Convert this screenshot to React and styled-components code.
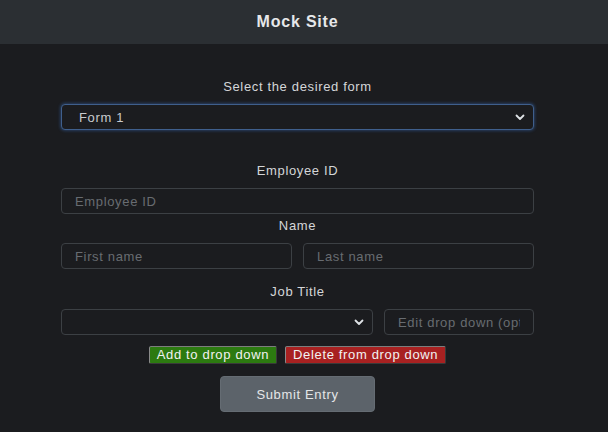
import styled, { createGlobalStyle } from "styled-components";

const GlobalStyle = createGlobalStyle`
  html, body {
    margin: 0;
    padding: 0;
    background-color: #1b1c1f;
    font-family: "Liberation Sans", Arial, sans-serif;
    color: #dee2e6;
  }
`;

const Chevron = () => (
  <svg width="10" height="7" viewBox="0 0 10 7">
    <polyline
      points="1.5,1.5 5,5 8.5,1.5"
      fill="none"
      stroke="#dee2e6"
      strokeWidth="1.8"
      strokeLinecap="round"
      strokeLinejoin="round"
    />
  </svg>
);

const App = () => {
  return (
    <>
      <GlobalStyle />
      <Header>
        <Title>Mock Site</Title>
      </Header>
      <Main>
        <Container>
          <Label $top={0}>Select the desired form</Label>
          <Select $focused>
            <span>Form 1</span>
            <Chevron />
          </Select>

          <Label $top={33}>Employee ID</Label>
          <Input placeholder="Employee ID" />

          <Label $top={4}>Name</Label>
          <Row $cols="1fr 1fr">
            <Input placeholder="First name" />
            <Input placeholder="Last name" />
          </Row>

          <Label $top={15}>Job Title</Label>
          <Row $cols="312fr 150fr">
            <Select>
              <span />
              <Chevron />
            </Select>
            <Input placeholder="Edit drop down (optional)" />
          </Row>

          <ButtonRow>
            <SmallButton $bg="#2c7a10">Add to drop down</SmallButton>
            <SmallButton $bg="#a82121">Delete from drop down</SmallButton>
          </ButtonRow>

          <SubmitRow>
            <SubmitButton>Submit Entry</SubmitButton>
          </SubmitRow>
        </Container>
      </Main>
    </>
  );
};

export default App;

const Header = styled.header`
  height: 44px;
  background-color: #2b2f33;
  display: flex;
  align-items: center;
  justify-content: center;
  padding-right: 13px;
`;

const Title = styled.h1`
  margin: 0;
  font-size: 16px;
  font-weight: 700;
  letter-spacing: 0.05em;
  color: #e6e8ea;
`;

const Main = styled.main`
  width: 595px;
  padding-top: 35px;
`;

const Container = styled.div`
  width: 473px;
  margin: 0 auto;
  display: flex;
  flex-direction: column;
`;

const Label = styled.label`
  display: block;
  margin-top: ${(p) => p.$top}px;
  margin-bottom: 9px;
  text-align: center;
  font-size: 13px;
  line-height: 16px;
  letter-spacing: 0.05em;
  color: #d4d6d8;
`;

const Row = styled.div`
  display: grid;
  grid-template-columns: ${(p) => p.$cols};
  gap: 11px;
`;

const Input = styled.input`
  box-sizing: border-box;
  width: 100%;
  height: 26px;
  padding: 0 13px;
  background-color: #1b1c1f;
  border: 1px solid #3c4044;
  border-radius: 4px;
  font-family: "Liberation Sans", Arial, sans-serif;
  font-size: 13px;
  letter-spacing: 0.05em;
  color: #dee2e6;
  outline: none;
  &::placeholder {
    color: #686c71;
  }
`;

const Select = styled.div`
  box-sizing: border-box;
  height: 26px;
  padding: 0 8px 0 17px;
  display: flex;
  align-items: center;
  justify-content: space-between;
  background-color: #1b1c1f;
  border: 1px solid ${(p) => (p.$focused ? "#3f5f8c" : "#3c4044")};
  border-radius: 4px;
  box-shadow: ${(p) =>
    p.$focused ? "0 0 3px 1px rgba(55, 105, 175, 0.45)" : "none"};
  font-size: 13px;
  letter-spacing: 0.05em;
  color: #c9cbcd;
`;

const ButtonRow = styled.div`
  margin-top: 11px;
  display: flex;
  justify-content: center;
  gap: 8px;
`;

const SmallButton = styled.button`
  box-sizing: border-box;
  height: 18px;
  padding: 0 7px;
  background-color: ${(p) => p.$bg};
  border: 1px solid;
  border-color: #7d7d7d #3a3a3a #3a3a3a #8a8a8a;
  border-radius: 2px;
  font-family: "Liberation Sans", Arial, sans-serif;
  font-size: 13px;
  line-height: 16px;
  letter-spacing: 0.05em;
  color: #f2f2f2;
`;

const SubmitRow = styled.div`
  margin-top: 12px;
  display: flex;
  justify-content: center;
`;

const SubmitButton = styled.button`
  box-sizing: border-box;
  width: 155px;
  height: 36px;
  background-color: #5c636a;
  border: 1px solid #656c73;
  border-radius: 4px;
  font-family: "Liberation Sans", Arial, sans-serif;
  font-size: 13px;
  letter-spacing: 0.05em;
  color: #e4e6e8;
`;
